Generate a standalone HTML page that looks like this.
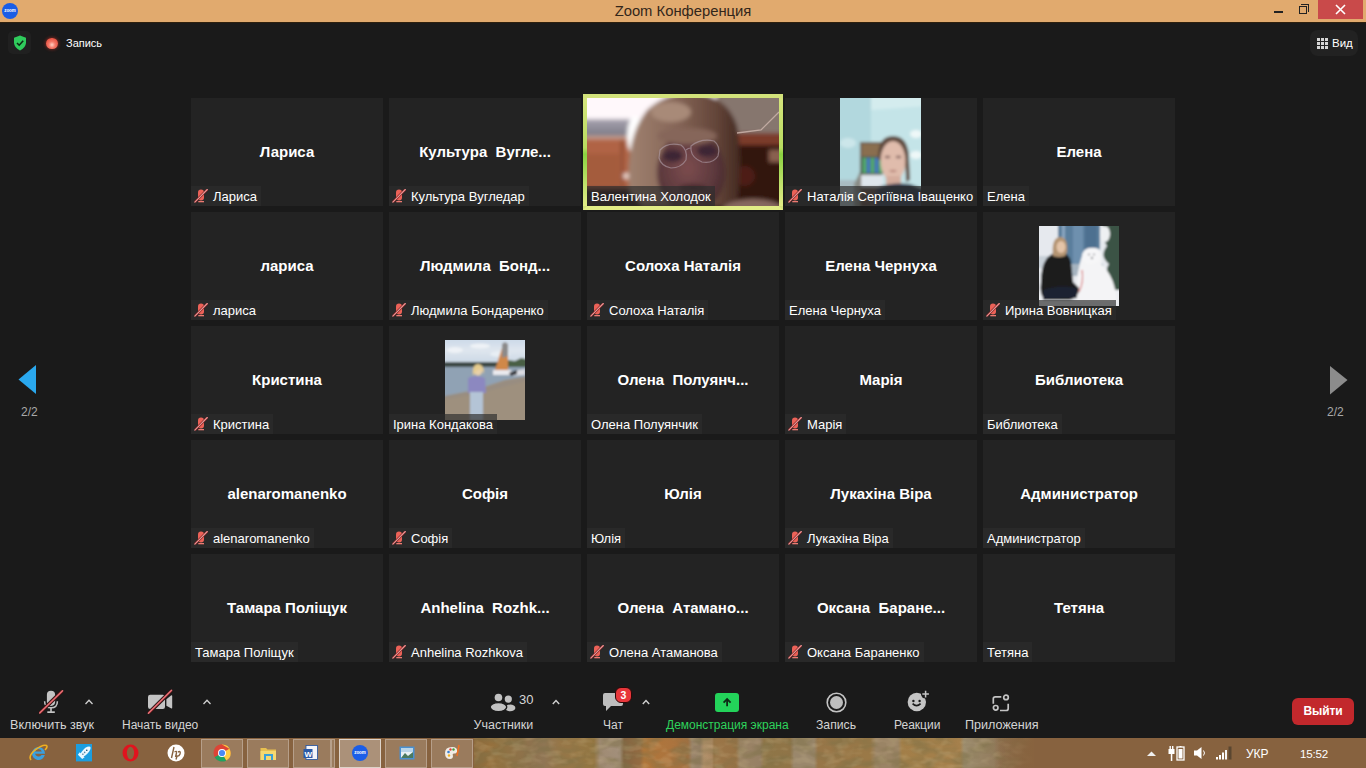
<!DOCTYPE html>
<html><head><meta charset="utf-8">
<style>
*{margin:0;padding:0;box-sizing:border-box}
html,body{width:1366px;height:768px;overflow:hidden;background:#1a1a1a;font-family:"Liberation Sans",sans-serif;position:relative}
.a{position:absolute}
#title{position:absolute;left:0;top:0;width:1366px;height:23px;background:#e1aa6e;border-bottom:1px solid #2e200e}
#title .t{position:absolute;left:0;width:1366px;top:3px;text-align:center;font-size:14.8px;color:#33261a}
#logo{position:absolute;left:2px;top:3px;width:16px;height:16px;border-radius:50%;background:#1a5de6;font-size:4.5px;color:#fff;text-align:center;line-height:16px;font-weight:bold}
#close{position:absolute;left:1318px;top:0;width:45px;height:19px;background:#c94a4a}
.tile{position:absolute;width:192px;height:108px;background:#232323;overflow:hidden}
.tile.active{overflow:visible}
.tile.active::before{content:"";position:absolute;left:-4px;top:-4px;right:-4px;bottom:-4px;border:4px solid #d2e27a;border-bottom-color:#e2ec86;z-index:3}
.tile.active::after{content:"";position:absolute;left:-4px;top:0;width:200px;height:108px;background:linear-gradient(180deg,#d4e47c 0%,#b8dc60 46%,#8ad240 52%,#c0e26c 80%,#e2ec86 100%);-webkit-mask:linear-gradient(90deg,#000 4px,transparent 4px,transparent 196px,#000 196px);z-index:3}
.cn{position:absolute;left:0;top:0;width:192px;height:108px;line-height:108px;text-align:center;font-weight:bold;font-size:15px;color:#fff;white-space:nowrap}
.lb{position:absolute;left:0;bottom:0;height:20px;background:rgba(45,45,45,0.675);padding:0 4px 0 4px;white-space:nowrap;font-size:13px;color:#fff;display:flex;align-items:center;z-index:2}
.lb .mic{margin-right:5px;margin-left:-1px}
.lb span{line-height:20px;position:relative;top:1px}
.tl{position:absolute;font-size:12px;color:#d4d4d4;white-space:nowrap;top:717px;line-height:16px}
#taskbar{position:absolute;left:0;top:738px;width:1366px;height:30px;background:#87623f}
#wall{position:absolute;left:474px;top:0;width:560px;height:30px;background:linear-gradient(90deg,#98703e 0px,#a27a44 16px,#9c7c4a 30px,#9a7c56 56px,#9c805e 70px,#a48250 86px,#a08048 120px,#ae9880 126px,#b09c88 146px,#8e6c48 150px,#a07448 166px,#c08040 170px,#bc7e44 196px,#b07a48 214px,#a89078 218px,#a08a70 226px,#c4a078 230px,#c09870 238px,#a88050 240px,#a47c4c 262px,#a89070 266px,#a48c70 286px,#9a8050 290px,#9c7e4e 316px,#a89478 320px,#a89478 340px,#a48050 344px,#a8844e 396px,#a89070 402px,#a89070 424px,#b08a50 428px,#b48c54 486px,#a89878 490px,#a08868 520px,#9a7a58 526px,#8c6842 560px)}
.tbtn{position:absolute;top:1px;height:29px;width:42px;background:rgba(255,255,255,0.16);border:1px solid rgba(255,255,255,0.28)}
</style></head><body>
<div id="title"><div id="logo">zoom</div><div class="t">Zoom Конференция</div>
<div class="a" style="left:1274px;top:11px;width:9px;height:2px;background:#222"></div>
<div class="a" style="left:1299px;top:6px;width:8px;height:8px;border:1.5px solid #222"></div>
<div class="a" style="left:1301px;top:4px;width:8px;height:8px;border-top:1.5px solid #222;border-right:1.5px solid #222"></div>
<div id="close"><svg width="45" height="19" viewBox="0 0 45 19"><path d="M18 5 L27 14 M27 5 L18 14" stroke="#fff" stroke-width="1.6"/></svg></div>
</div>
<!-- top bar -->
<div class="a" style="left:8px;top:31px;width:23px;height:23px;border-radius:5px;background:#202020"></div>
<svg class="a" style="left:13px;top:35px" width="14" height="16" viewBox="0 0 14 16"><path d="M7 0.5 L13 2.8 L13 8 Q12.5 13 7 15.5 Q1.5 13 1 8 L1 2.8Z" fill="#2fcb5c"/><path d="M4 8 L6.2 10.2 L10.2 5.8" stroke="#0d2a14" stroke-width="1.6" fill="none"/></svg>
<div class="a" style="left:46px;top:37.5px;width:11.5px;height:11.5px;border-radius:50%;background:radial-gradient(circle at 50% 62%,#ffd0c4 0,#f47868 35%,#e44a3a 80%);box-shadow:0 0 3px 1px rgba(200,50,40,0.45)"></div>
<div class="a" style="left:66px;top:36.5px;font-size:11px;color:#fff">Запись</div>
<div class="a" style="left:1310px;top:30px;width:48px;height:26px;border-radius:8px;background:#222"></div>
<svg class="a" style="left:1317px;top:38px" width="11" height="11" viewBox="0 0 11 11" fill="#d6d6d6"><rect x="0" y="0" width="3" height="3"/><rect x="4" y="0" width="3" height="3"/><rect x="8" y="0" width="3" height="3"/><rect x="0" y="4" width="3" height="3"/><rect x="4" y="4" width="3" height="3"/><rect x="8" y="4" width="3" height="3"/><rect x="0" y="8" width="3" height="3"/><rect x="4" y="8" width="3" height="3"/><rect x="8" y="8" width="3" height="3"/></svg>
<div class="a" style="left:1332px;top:36.5px;font-size:11.5px;color:#fff">Вид</div>
<!-- side arrows -->
<svg class="a" style="left:18px;top:365px" width="19" height="30" viewBox="0 0 19 30"><path d="M0.5 14.5 L18 0 L18 29Z" fill="#2aa8ee"/></svg>
<div class="a" style="left:21px;top:405px;font-size:12px;color:#a8a8a8">2/2</div>
<svg class="a" style="left:1330px;top:366px" width="18" height="29" viewBox="0 0 18 29"><path d="M0 0 L17.5 14 L0 28.5Z" fill="#8c8c8c"/></svg>
<div class="a" style="left:1327px;top:405px;font-size:12px;color:#a8a8a8">2/2</div>
<div class="tile" style="left:191px;top:98px"><div class="cn">Лариса</div><div class="lb"><svg class="mic" width="14" height="14" viewBox="0 0 14 14"><rect x="4" y="0.4" width="6" height="11.2" rx="3" fill="#ec6258"/><rect x="4.3" y="12" width="5.7" height="1.3" fill="#ec7a72"/><path d="M0.8 13.1 L13.3 0.5" stroke="#7a1c1c" stroke-width="2.4"/><path d="M0.8 13.1 L13.3 0.5" stroke="#e89a9a" stroke-width="1.1" stroke-linecap="round"/></svg><span>Лариса</span></div></div>
<div class="tile" style="left:389px;top:98px"><div class="cn">Культура&nbsp; Вугле...</div><div class="lb"><svg class="mic" width="14" height="14" viewBox="0 0 14 14"><rect x="4" y="0.4" width="6" height="11.2" rx="3" fill="#ec6258"/><rect x="4.3" y="12" width="5.7" height="1.3" fill="#ec7a72"/><path d="M0.8 13.1 L13.3 0.5" stroke="#7a1c1c" stroke-width="2.4"/><path d="M0.8 13.1 L13.3 0.5" stroke="#e89a9a" stroke-width="1.1" stroke-linecap="round"/></svg><span>Культура Вугледар</span></div></div>
<div class="tile active" style="left:587px;top:98px"><svg width="192" height="108" viewBox="0 0 192 108" style="position:absolute;left:0;top:0">
<defs><filter id="vb" x="-10%" y="-10%" width="120%" height="120%"><feGaussianBlur stdDeviation="2"/></filter><filter id="vb2"><feGaussianBlur stdDeviation="0.5"/></filter><clipPath id="vc"><rect width="192" height="108"/></clipPath>
<linearGradient id="vwall" x1="0" y1="0" x2="0" y2="1"><stop offset="0" stop-color="#a8a4b0"/><stop offset="1" stop-color="#7c7a86"/></linearGradient>
<linearGradient id="vhairg" x1="0" y1="0" x2="1" y2="0"><stop offset="0" stop-color="#a08270"/><stop offset="0.45" stop-color="#846456"/><stop offset="0.8" stop-color="#624438"/><stop offset="1" stop-color="#442a22"/></linearGradient>
<radialGradient id="vfaceg" cx="0.45" cy="0.45" r="0.6"><stop offset="0" stop-color="#7c4c4e"/><stop offset="0.65" stop-color="#5e3a3e"/><stop offset="1" stop-color="#46282c"/></radialGradient></defs>
<g clip-path="url(#vc)"><g filter="url(#vb)">
<rect x="-10" y="-10" width="212" height="128" fill="#2c1612"/>
<rect x="120" y="-10" width="82" height="46" fill="#86766e"/>
<rect x="-10" y="-10" width="140" height="32" fill="#fff8fb"/>
<rect x="-10" y="21" width="58" height="17" fill="url(#vwall)"/>
<rect x="-10" y="38" width="56" height="52" fill="#b06444"/>
<rect x="-10" y="38" width="56" height="3" fill="#c8a090"/>
<rect x="-2" y="56" width="34" height="32" fill="#a45c3e"/>
<rect x="34" y="42" width="2" height="46" fill="#7a3c2c"/>
<ellipse cx="40" cy="78" rx="4" ry="3" fill="#f0d8d0"/>
<rect x="150" y="35" width="52" height="12" fill="#7c3a2a"/>
<rect x="150" y="47" width="52" height="61" fill="#32160f"/>
<ellipse cx="158" cy="78" rx="10" ry="10" fill="#4e1e16"/>
<rect x="182" y="52" width="14" height="12" fill="#8a6050"/>
<ellipse cx="48" cy="38" rx="8" ry="20" fill="#ffffff"/>
<path d="M42 92 Q38 40 60 12 Q80 -6 106 -5 Q140 -3 150 28 Q156 60 150 108 L56 108Z" fill="url(#vhairg)"/>
<ellipse cx="84" cy="14" rx="20" ry="10" fill="#a88a78"/>
<ellipse cx="104" cy="74" rx="34" ry="40" fill="url(#vfaceg)"/>
<ellipse cx="100" cy="38" rx="30" ry="8" fill="#86665a"/>
<ellipse cx="86" cy="58" rx="10" ry="6" fill="#3e2634"/>
<ellipse cx="120" cy="53" rx="10" ry="6" fill="#3e2634"/>
<ellipse cx="106" cy="90" rx="14" ry="4" fill="#4a2a2e"/>
<ellipse cx="166" cy="114" rx="32" ry="13" fill="#86685e"/>
</g>
<path d="M150 35 L174 32 L192 14" stroke="#d0b8b0" stroke-width="1.3" fill="none" filter="url(#vb2)" opacity="0.8"/>
<g filter="url(#vb2)" fill="none" stroke="#b8a8b4" stroke-width="1.2" opacity="0.55"><path d="M73 52 Q80 44 94 47 Q101 52 99 62 Q94 70 84 70 Q74 68 72 60Z"/><path d="M104 48 Q114 40 127 43 Q134 48 131 58 Q126 66 115 64 Q105 60 104 52Z"/><path d="M99 52 Q101 50 104 50"/></g>
</g>
</svg><div class="lb"><span>Валентина Холодок</span></div></div>
<div class="tile" style="left:785px;top:98px"><svg width="81" height="108" viewBox="0 0 81 108" style="position:absolute;left:55px;top:0">
<defs><filter id="nb" x="-5%" y="-5%" width="110%" height="110%"><feGaussianBlur stdDeviation="1.4"/></filter><clipPath id="nc"><rect width="81" height="108"/></clipPath></defs>
<g clip-path="url(#nc)"><g filter="url(#nb)">
<rect x="-5" y="-5" width="91" height="118" fill="#c4e4e8"/>
<rect x="-5" y="-5" width="36" height="118" fill="#b2d8de"/>
<path d="M31 -5 L86 -5 L86 8 L31 12Z" fill="#d4ecee"/>
<ellipse cx="76" cy="36" rx="6" ry="4" fill="#eef8f8"/>
<ellipse cx="76" cy="57" rx="6" ry="4" fill="#eef8f8"/>
<ellipse cx="8" cy="45" rx="8" ry="5" fill="#cce6ea"/>
<rect x="-5" y="82" width="26" height="30" fill="#a8bcc2"/>
<path d="M14 86 L22 70 L24 110 L14 110Z" fill="#8a8e88"/>
<rect x="20" y="44" width="22" height="66" fill="#6e5a48"/>
<rect x="22" y="46" width="18" height="12" fill="#8a6e50"/>
<rect x="21" y="59" width="22" height="17" fill="#3a6a56"/>
<rect x="23" y="60" width="3" height="15" fill="#58b070"/><rect x="27" y="60" width="3" height="15" fill="#4a7ac8"/><rect x="31" y="60" width="3" height="15" fill="#58b070"/><rect x="35" y="60" width="3" height="15" fill="#4a7ac8"/><rect x="39" y="60" width="3" height="15" fill="#58b070"/>
<rect x="21" y="77" width="22" height="12" fill="#dfe6ec"/>
<rect x="21" y="90" width="22" height="20" fill="#5a4a40"/>
<path d="M38 62 Q37 38 53 38 Q69 38 69 62 L70 82 L66 84 Q66 46 53 46 Q42 46 41 62Z" fill="#5e4a3e"/>
<ellipse cx="53" cy="63" rx="12.5" ry="20" fill="#e0bcac"/>
<rect x="46" y="78" width="15" height="12" fill="#d4ac9c"/>
<ellipse cx="47.5" cy="59" rx="2.8" ry="1.2" fill="#7a5a58"/><ellipse cx="58.5" cy="59" rx="2.8" ry="1.2" fill="#7a5a58"/>
<ellipse cx="53" cy="73" rx="3.5" ry="1" fill="#b07a70"/>
<path d="M36 90 Q50 84 70 86 L86 92 L86 112 L36 112Z" fill="#2c3448"/>
</g></g>
</svg><div class="lb"><svg class="mic" width="14" height="14" viewBox="0 0 14 14"><rect x="4" y="0.4" width="6" height="11.2" rx="3" fill="#ec6258"/><rect x="4.3" y="12" width="5.7" height="1.3" fill="#ec7a72"/><path d="M0.8 13.1 L13.3 0.5" stroke="#7a1c1c" stroke-width="2.4"/><path d="M0.8 13.1 L13.3 0.5" stroke="#e89a9a" stroke-width="1.1" stroke-linecap="round"/></svg><span>Наталія Сергіївна Іващенко</span></div></div>
<div class="tile" style="left:983px;top:98px"><div class="cn">Елена</div><div class="lb"><span>Елена</span></div></div>
<div class="tile" style="left:191px;top:212px"><div class="cn">лариса</div><div class="lb"><svg class="mic" width="14" height="14" viewBox="0 0 14 14"><rect x="4" y="0.4" width="6" height="11.2" rx="3" fill="#ec6258"/><rect x="4.3" y="12" width="5.7" height="1.3" fill="#ec7a72"/><path d="M0.8 13.1 L13.3 0.5" stroke="#7a1c1c" stroke-width="2.4"/><path d="M0.8 13.1 L13.3 0.5" stroke="#e89a9a" stroke-width="1.1" stroke-linecap="round"/></svg><span>лариса</span></div></div>
<div class="tile" style="left:389px;top:212px"><div class="cn">Людмила&nbsp; Бонд...</div><div class="lb"><svg class="mic" width="14" height="14" viewBox="0 0 14 14"><rect x="4" y="0.4" width="6" height="11.2" rx="3" fill="#ec6258"/><rect x="4.3" y="12" width="5.7" height="1.3" fill="#ec7a72"/><path d="M0.8 13.1 L13.3 0.5" stroke="#7a1c1c" stroke-width="2.4"/><path d="M0.8 13.1 L13.3 0.5" stroke="#e89a9a" stroke-width="1.1" stroke-linecap="round"/></svg><span>Людмила Бондаренко</span></div></div>
<div class="tile" style="left:587px;top:212px"><div class="cn">Солоха Наталія</div><div class="lb"><svg class="mic" width="14" height="14" viewBox="0 0 14 14"><rect x="4" y="0.4" width="6" height="11.2" rx="3" fill="#ec6258"/><rect x="4.3" y="12" width="5.7" height="1.3" fill="#ec7a72"/><path d="M0.8 13.1 L13.3 0.5" stroke="#7a1c1c" stroke-width="2.4"/><path d="M0.8 13.1 L13.3 0.5" stroke="#e89a9a" stroke-width="1.1" stroke-linecap="round"/></svg><span>Солоха Наталія</span></div></div>
<div class="tile" style="left:785px;top:212px"><div class="cn">Елена Чернуха</div><div class="lb"><span>Елена Чернуха</span></div></div>
<div class="tile" style="left:983px;top:212px"><svg width="80" height="80" viewBox="0 0 80 80" style="position:absolute;left:56px;top:14px">
<defs><filter id="ib" x="-5%" y="-5%" width="110%" height="110%"><feGaussianBlur stdDeviation="0.8"/></filter><clipPath id="ic"><rect width="80" height="80"/></clipPath></defs>
<g clip-path="url(#ic)"><g filter="url(#ib)">
<rect x="-5" y="-5" width="90" height="90" fill="#e6e9ee"/>
<rect x="19" y="-5" width="42" height="44" fill="#5a7e9c"/>
<rect x="23" y="-5" width="3" height="44" fill="#8aa6c0"/>
<rect x="34" y="-5" width="10" height="44" fill="#6e90ae"/>
<rect x="46" y="-5" width="12" height="44" fill="#4e7090"/>
<rect x="-5" y="30" width="24" height="12" fill="#c8d0d8"/>
<rect x="19" y="38" width="45" height="12" fill="#a6b4c0"/>
<path d="M62 -5 L85 -5 L85 78 L72 76 Q70 64 74 56 Q64 46 70 38 Q60 30 68 20 Q62 10 66 4Z" fill="#3a5244"/>
<ellipse cx="66" cy="8" rx="5" ry="8" fill="#eef0f2"/>
<rect x="-5" y="64" width="90" height="22" fill="#eceef2"/>
<path d="M38 76 Q36 56 40 42 Q42 30 46 24 Q52 20 60 23 Q64 28 62 38 Q76 50 78 76Z" fill="#f4f4f6"/>
<ellipse cx="52" cy="30" rx="9" ry="8" fill="#f6f6f8"/>
<circle cx="50" cy="28.5" r="0.7" fill="#333"/><circle cx="55" cy="28.5" r="0.7" fill="#333"/><ellipse cx="53" cy="32" rx="1" ry="0.8" fill="#222"/>
<path d="M2 56 Q2 40 8 32 Q14 26 20 26 Q30 26 32 36 L34 56 L40 62 Q40 72 30 74 L6 74 Q0 68 2 56Z" fill="#1c1e1e"/>
<path d="M4 64 Q20 58 38 62 L38 72 L4 74Z" fill="#1a2230"/>
<path d="M14 30 Q12 12 21 11 Q29 11 28 26 L26 30 Q20 32 14 30Z" fill="#b49472"/>
<ellipse cx="22" cy="21" rx="4.5" ry="6" fill="#e4c4a8"/>
<path d="M43 44 Q45 56 40 66" stroke="#d04848" stroke-width="0.9" fill="none"/>
</g></g>
</svg><div class="lb"><svg class="mic" width="14" height="14" viewBox="0 0 14 14"><rect x="4" y="0.4" width="6" height="11.2" rx="3" fill="#ec6258"/><rect x="4.3" y="12" width="5.7" height="1.3" fill="#ec7a72"/><path d="M0.8 13.1 L13.3 0.5" stroke="#7a1c1c" stroke-width="2.4"/><path d="M0.8 13.1 L13.3 0.5" stroke="#e89a9a" stroke-width="1.1" stroke-linecap="round"/></svg><span>Ирина Вовницкая</span></div></div>
<div class="tile" style="left:191px;top:326px"><div class="cn">Кристина</div><div class="lb"><svg class="mic" width="14" height="14" viewBox="0 0 14 14"><rect x="4" y="0.4" width="6" height="11.2" rx="3" fill="#ec6258"/><rect x="4.3" y="12" width="5.7" height="1.3" fill="#ec7a72"/><path d="M0.8 13.1 L13.3 0.5" stroke="#7a1c1c" stroke-width="2.4"/><path d="M0.8 13.1 L13.3 0.5" stroke="#e89a9a" stroke-width="1.1" stroke-linecap="round"/></svg><span>Кристина</span></div></div>
<div class="tile" style="left:389px;top:326px"><svg width="80" height="80" viewBox="0 0 80 80" style="position:absolute;left:56px;top:14px">
<defs><filter id="kb" x="-5%" y="-5%" width="110%" height="110%"><feGaussianBlur stdDeviation="0.8"/></filter><clipPath id="kc"><rect width="80" height="80"/></clipPath>
<linearGradient id="ksky" x1="0" y1="0" x2="0" y2="1"><stop offset="0" stop-color="#c4d4e6"/><stop offset="0.5" stop-color="#dfe6ee"/><stop offset="1" stop-color="#c8d6e4"/></linearGradient></defs>
<g clip-path="url(#kc)"><g filter="url(#kb)">
<rect x="-5" y="-5" width="90" height="30" fill="url(#ksky)"/>
<ellipse cx="10" cy="10" rx="8" ry="3" fill="#eef2f6"/><ellipse cx="35" cy="6" rx="10" ry="2.5" fill="#eef2f6"/><ellipse cx="55" cy="14" rx="10" ry="3" fill="#e8eef4"/>
<rect x="-5" y="22" width="90" height="5" fill="#3c4a44"/>
<path d="M58 27 L62 20 L70 21 L76 18 L85 20 L85 30 L58 30Z" fill="#4a5e44"/>
<rect x="-5" y="27" width="90" height="30" fill="#90a2b4"/>
<path d="M-5 57 L30 50 L60 40 L85 36 L85 85 L-5 85Z" fill="#9e907e"/>
<path d="M-5 60 L30 54 L85 40 L85 37 L60 41 L30 51 L-5 57Z" fill="#948c84" opacity="0.6"/>
<path d="M50 30 L57 8 L63 6 L63 30Z" fill="#d0884a"/>
<path d="M57 4 L60 2 L63 4 L63 16 L57 18Z" fill="#8c8a8a"/>
<rect x="48" y="30" width="18" height="5" fill="#eaeaee"/>
<path d="M64 32 L80 29 L80 35 L66 36Z" fill="#dcdce2"/><path d="M64 33 L72 30 L72 34 L66 36Z" fill="#2a2a30"/>
<path d="M23 38 Q30 34 40 38 L41 53 L23 53Z" fill="#8c88c0"/>
<rect x="25" y="52" width="13" height="28" fill="#b4c4d6"/>
<ellipse cx="33" cy="30" rx="4.5" ry="5.5" fill="#e8d0a8"/>
<path d="M28 36 Q27 24 33 24 Q39 24 39 34 L37 30 Q33 28 30 32Z" fill="#e6cc8e"/>
</g></g>
</svg><div class="lb"><span>Ірина Кондакова</span></div></div>
<div class="tile" style="left:587px;top:326px"><div class="cn">Олена&nbsp; Полуянч...</div><div class="lb"><span>Олена Полуянчик</span></div></div>
<div class="tile" style="left:785px;top:326px"><div class="cn">Марія</div><div class="lb"><svg class="mic" width="14" height="14" viewBox="0 0 14 14"><rect x="4" y="0.4" width="6" height="11.2" rx="3" fill="#ec6258"/><rect x="4.3" y="12" width="5.7" height="1.3" fill="#ec7a72"/><path d="M0.8 13.1 L13.3 0.5" stroke="#7a1c1c" stroke-width="2.4"/><path d="M0.8 13.1 L13.3 0.5" stroke="#e89a9a" stroke-width="1.1" stroke-linecap="round"/></svg><span>Марія</span></div></div>
<div class="tile" style="left:983px;top:326px"><div class="cn">Библиотека</div><div class="lb"><span>Библиотека</span></div></div>
<div class="tile" style="left:191px;top:440px"><div class="cn">alenaromanenko</div><div class="lb"><svg class="mic" width="14" height="14" viewBox="0 0 14 14"><rect x="4" y="0.4" width="6" height="11.2" rx="3" fill="#ec6258"/><rect x="4.3" y="12" width="5.7" height="1.3" fill="#ec7a72"/><path d="M0.8 13.1 L13.3 0.5" stroke="#7a1c1c" stroke-width="2.4"/><path d="M0.8 13.1 L13.3 0.5" stroke="#e89a9a" stroke-width="1.1" stroke-linecap="round"/></svg><span>alenaromanenko</span></div></div>
<div class="tile" style="left:389px;top:440px"><div class="cn">Софія</div><div class="lb"><svg class="mic" width="14" height="14" viewBox="0 0 14 14"><rect x="4" y="0.4" width="6" height="11.2" rx="3" fill="#ec6258"/><rect x="4.3" y="12" width="5.7" height="1.3" fill="#ec7a72"/><path d="M0.8 13.1 L13.3 0.5" stroke="#7a1c1c" stroke-width="2.4"/><path d="M0.8 13.1 L13.3 0.5" stroke="#e89a9a" stroke-width="1.1" stroke-linecap="round"/></svg><span>Софія</span></div></div>
<div class="tile" style="left:587px;top:440px"><div class="cn">Юлія</div><div class="lb"><span>Юлія</span></div></div>
<div class="tile" style="left:785px;top:440px"><div class="cn">Лукахіна Віра</div><div class="lb"><svg class="mic" width="14" height="14" viewBox="0 0 14 14"><rect x="4" y="0.4" width="6" height="11.2" rx="3" fill="#ec6258"/><rect x="4.3" y="12" width="5.7" height="1.3" fill="#ec7a72"/><path d="M0.8 13.1 L13.3 0.5" stroke="#7a1c1c" stroke-width="2.4"/><path d="M0.8 13.1 L13.3 0.5" stroke="#e89a9a" stroke-width="1.1" stroke-linecap="round"/></svg><span>Лукахіна Віра</span></div></div>
<div class="tile" style="left:983px;top:440px"><div class="cn">Администратор</div><div class="lb"><span>Администратор</span></div></div>
<div class="tile" style="left:191px;top:554px"><div class="cn">Тамара Поліщук</div><div class="lb"><span>Тамара Поліщук</span></div></div>
<div class="tile" style="left:389px;top:554px"><div class="cn">Anhelina&nbsp; Rozhk...</div><div class="lb"><svg class="mic" width="14" height="14" viewBox="0 0 14 14"><rect x="4" y="0.4" width="6" height="11.2" rx="3" fill="#ec6258"/><rect x="4.3" y="12" width="5.7" height="1.3" fill="#ec7a72"/><path d="M0.8 13.1 L13.3 0.5" stroke="#7a1c1c" stroke-width="2.4"/><path d="M0.8 13.1 L13.3 0.5" stroke="#e89a9a" stroke-width="1.1" stroke-linecap="round"/></svg><span>Anhelina Rozhkova</span></div></div>
<div class="tile" style="left:587px;top:554px"><div class="cn">Олена&nbsp; Атамано...</div><div class="lb"><svg class="mic" width="14" height="14" viewBox="0 0 14 14"><rect x="4" y="0.4" width="6" height="11.2" rx="3" fill="#ec6258"/><rect x="4.3" y="12" width="5.7" height="1.3" fill="#ec7a72"/><path d="M0.8 13.1 L13.3 0.5" stroke="#7a1c1c" stroke-width="2.4"/><path d="M0.8 13.1 L13.3 0.5" stroke="#e89a9a" stroke-width="1.1" stroke-linecap="round"/></svg><span>Олена Атаманова</span></div></div>
<div class="tile" style="left:785px;top:554px"><div class="cn">Оксана&nbsp; Бaране...</div><div class="lb"><svg class="mic" width="14" height="14" viewBox="0 0 14 14"><rect x="4" y="0.4" width="6" height="11.2" rx="3" fill="#ec6258"/><rect x="4.3" y="12" width="5.7" height="1.3" fill="#ec7a72"/><path d="M0.8 13.1 L13.3 0.5" stroke="#7a1c1c" stroke-width="2.4"/><path d="M0.8 13.1 L13.3 0.5" stroke="#e89a9a" stroke-width="1.1" stroke-linecap="round"/></svg><span>Оксана Бараненко</span></div></div>
<div class="tile" style="left:983px;top:554px"><div class="cn">Тетяна</div><div class="lb"><span>Тетяна</span></div></div>

<!-- toolbar -->
<svg class="a" style="left:36px;top:686px" width="30" height="30" viewBox="0 0 30 30"><rect x="10.9" y="4.7" width="8.2" height="15.2" rx="4.1" fill="#c4c4c4"/><path d="M8.6 15.2 Q8.6 21.8 15 21.8 Q21.4 21.8 21.4 15.2" stroke="#c4c4c4" stroke-width="1.5" fill="none"/><rect x="14.2" y="21.5" width="1.6" height="4.5" fill="#c4c4c4"/><rect x="11.3" y="25.3" width="7.5" height="1.7" fill="#c4c4c4"/><path d="M3.7 27 L26.6 4.7" stroke="#1a1a1a" stroke-width="3.8"/><path d="M3.7 27 L26.6 4.7" stroke="#6a1818" stroke-width="2.6"/><path d="M3.7 27 L26.6 4.7" stroke="#e8737a" stroke-width="1.5" stroke-linecap="round"/></svg>
<svg class="a" style="left:84px;top:698px" width="10" height="8" viewBox="0 0 10 8"><path d="M1.5 6 L5 2.3 L8.5 6" stroke="#d0d0d0" stroke-width="1.3" fill="none"/></svg>
<div class="tl" style="left:10px;font-size:12.6px">Включить звук</div>
<svg class="a" style="left:140px;top:686px" width="34" height="30" viewBox="0 0 34 30"><rect x="8" y="8.8" width="17" height="14.2" rx="2.2" fill="#c4c4c4"/><path d="M26.4 13.3 L31 9.6 Q32.2 8.8 32.2 10.2 L32.2 21.6 Q32.2 23 31 22.2 L26.4 19.8Z" fill="#c4c4c4"/><path d="M8.4 27.3 L31.6 4.3" stroke="#1a1a1a" stroke-width="3.8"/><path d="M8.4 27.3 L31.6 4.3" stroke="#6a1818" stroke-width="2.6"/><path d="M8.4 27.3 L31.6 4.3" stroke="#e8737a" stroke-width="1.5" stroke-linecap="round"/></svg>
<svg class="a" style="left:202px;top:698px" width="10" height="8" viewBox="0 0 10 8"><path d="M1.5 6 L5 2.3 L8.5 6" stroke="#d0d0d0" stroke-width="1.3" fill="none"/></svg>
<div class="tl" style="left:122px;font-size:12px">Начать видео</div>
<svg class="a" style="left:486px;top:688px" width="32" height="26" viewBox="0 0 32 26" fill="#c2c2c2"><circle cx="12.45" cy="9.5" r="3.8"/><circle cx="22.3" cy="11.1" r="3.6"/><ellipse cx="24.2" cy="19.9" rx="5.2" ry="3.3"/><ellipse cx="12.45" cy="19.1" rx="8.3" ry="4.5" stroke="#1a1a1a" stroke-width="1.4"/></svg>
<div class="a" style="left:519px;top:692px;font-size:13px;color:#d6d6d6">30</div>
<svg class="a" style="left:552px;top:699px" width="8" height="6" viewBox="0 0 8 6"><path d="M0.8 5 L4 1.5 L7.2 5" stroke="#d0d0d0" stroke-width="1.4" fill="none"/></svg>
<div class="tl" style="left:473.5px;font-size:12.5px">Участники</div>
<svg class="a" style="left:602px;top:692px" width="22" height="20" viewBox="0 0 22 20"><path d="M3 1 L19 1 Q21 1 21 3 L21 12 Q21 14 19 14 L9 14 L4 19 L4 14 L3 14 Q1 14 1 12 L1 3 Q1 1 3 1Z" fill="#bdbdbd"/></svg>
<div class="a" style="left:615px;top:687px;width:17px;height:16px;border-radius:6px;background:#e8363a;border:1px solid #2a0808;font-size:10.5px;font-weight:bold;color:#fff;text-align:center;line-height:14px">3</div>
<svg class="a" style="left:642px;top:699px" width="8" height="6" viewBox="0 0 8 6"><path d="M0.8 5 L4 1.5 L7.2 5" stroke="#d0d0d0" stroke-width="1.4" fill="none"/></svg>
<div class="tl" style="left:603px">Чат</div>
<div class="a" style="left:715px;top:693px;width:24px;height:19px;border-radius:3px;background:#23d35a"></div>
<svg class="a" style="left:721px;top:696px" width="12" height="12" viewBox="0 0 12 12"><path d="M6.1 3.2 L6.1 10.3" stroke="#0e2a16" stroke-width="1.8"/><path d="M2.6 6.6 L6.1 3 L9.6 6.6" stroke="#0e2a16" stroke-width="1.8" fill="none"/></svg>
<div class="tl" style="left:666px;color:#2ed35c">Демонстрация экрана</div>
<svg class="a" style="left:826px;top:692px" width="21" height="21" viewBox="0 0 21 21"><circle cx="10.5" cy="10.5" r="9.3" fill="none" stroke="#c4c4c4" stroke-width="1.6"/><circle cx="10.5" cy="10.5" r="6.5" fill="#bdbdbd"/></svg>
<div class="tl" style="left:816px;font-size:12.2px">Запись</div>
<svg class="a" style="left:905px;top:689px" width="26" height="24" viewBox="0 0 26 24"><circle cx="11.8" cy="13" r="9.2" fill="#c4c4c4"/><circle cx="20.6" cy="5" r="4.6" fill="#1a1a1a"/><path d="M20.6 1.8 L20.6 8.4 M17.3 5.1 L23.9 5.1" stroke="#c4c4c4" stroke-width="1.5"/><circle cx="8.4" cy="12" r="1.2" fill="#1a1a1a"/><circle cx="14.6" cy="12" r="1.2" fill="#1a1a1a"/><path d="M7.6 14.6 Q11.5 18.6 15.6 14.6" stroke="#1a1a1a" stroke-width="1.6" fill="none"/></svg>
<div class="tl" style="left:894px">Реакции</div>
<svg class="a" style="left:990px;top:693px" width="22" height="20" viewBox="0 0 22 20" fill="none" stroke="#c4c4c4" stroke-width="1.7"><path d="M3.3 10.7 L3.3 5.8 Q3.3 3.8 5.3 3.8 L11.3 3.8"/><circle cx="16" cy="4.4" r="2.3"/><circle cx="5.7" cy="14.8" r="2.3"/><path d="M18.2 10.7 L18.2 15.5 Q18.2 17.5 16.2 17.5 L10 17.5"/></svg>
<div class="tl" style="left:965px;font-size:12.6px">Приложения</div>
<div class="a" style="left:1292px;top:698px;width:62px;height:27px;border-radius:6px;background:#c2282c"></div>
<div class="a" style="left:1292px;top:698px;width:62px;height:27px;line-height:27px;text-align:center;font-size:12px;font-weight:bold;color:#fff;letter-spacing:-0.1px">Выйти</div>
<!-- taskbar -->
<div id="taskbar"><div id="wall"></div>
<svg class="a" style="left:474px;top:0" width="560" height="30" viewBox="0 0 560 30"><defs><filter id="tn" x="0" y="0" width="100%" height="100%"><feTurbulence type="fractalNoise" baseFrequency="0.05 0.1" numOctaves="2" seed="7"/><feColorMatrix type="matrix" values="0 0 0 0 0.25  0 0 0 0 0.2  0 0 0 0 0.08  3.5 0 0 0 -1.45"/></filter>
<filter id="tn2" x="0" y="0" width="100%" height="100%"><feTurbulence type="fractalNoise" baseFrequency="0.08 0.15" numOctaves="2" seed="3"/><feColorMatrix type="matrix" values="0 0 0 0 0.85  0 0 0 0 0.7  0 0 0 0 0.4  3.5 0 0 0 -1.6"/></filter>
<linearGradient id="tfade" x1="0" y1="0" x2="1" y2="0"><stop offset="0.93" stop-color="#88633f" stop-opacity="0"/><stop offset="1" stop-color="#88633f" stop-opacity="1"/></linearGradient></defs>
<rect width="560" height="30" filter="url(#tn)" opacity="0.5"/><rect width="560" height="30" filter="url(#tn2)" opacity="0.18"/><rect width="560" height="30" fill="#2a1a08" opacity="0.1"/><rect width="560" height="30" fill="url(#tfade)"/></svg>

<svg class="a" style="left:29px;top:6px" width="19" height="18" viewBox="0 0 19 18"><path d="M9.5 3 A6.5 6.5 0 1 0 15.8 11 L12.5 11 A3.6 3.6 0 0 1 6 9.8 L16 9.8 A6.5 6.5 0 0 0 9.5 3Z M6.2 7.6 A3.4 3.4 0 0 1 12.8 7.6Z" fill="#3aa0e0"/><path d="M2 16 Q-1 12 6 6 Q14 0 17.5 1.5 Q19 3 16 6" stroke="#f0b020" stroke-width="1.6" fill="none"/></svg>
<svg class="a" style="left:76px;top:6px" width="16" height="18" viewBox="0 0 16 18"><rect x="0" y="0" width="16" height="17.4" fill="#1b9ee0"/><g transform="rotate(45 9 8)"><ellipse cx="9" cy="7.5" rx="2.8" ry="6.8" fill="#eaf8ff"/><path d="M5.5 12 L12.5 12 L12 15 L6 15Z" fill="#eaf8ff"/><circle cx="9" cy="5.5" r="0.8" fill="#1a4a6a"/><circle cx="9" cy="8.5" r="0.8" fill="#5a8aa8"/><circle cx="9" cy="11" r="0.7" fill="#1a4a6a"/></g></svg>
<svg class="a" style="left:122px;top:6px" width="17" height="18" viewBox="0 0 17 18"><ellipse cx="8.5" cy="9" rx="8" ry="8.5" fill="#e0141e"/><ellipse cx="8.5" cy="9" rx="3.6" ry="6.3" fill="#88633f"/></svg>
<svg class="a" style="left:167px;top:6px" width="18" height="18" viewBox="0 0 18 18"><circle cx="9" cy="9" r="8.5" fill="#fff"/><path d="M7 3 L4.5 14 M7.5 8 Q10 6.5 9.5 9 L8.5 13 M11 8 Q14 6.5 13 10 Q12 12.5 10 12 L9 15.5" stroke="#87623f" stroke-width="1.4" fill="none"/></svg>
<div class="tbtn" style="left:201px"></div>
<div class="tbtn" style="left:247px"></div>
<div class="tbtn" style="left:293px;width:38px"></div>
<div class="tbtn" style="left:331px;width:4px"></div>
<div class="tbtn" style="left:339px;background:rgba(255,255,255,0.3);border-color:rgba(255,255,255,0.6)"></div>
<div class="tbtn" style="left:385px"></div>
<div class="tbtn" style="left:431px"></div>
<svg class="a" style="left:213px;top:6px" width="18" height="18" viewBox="0 0 18 18"><circle cx="9" cy="9" r="8.5" fill="#dd4436"/><path d="M9 9 L1.6 13.3 A8.5 8.5 0 0 0 13.3 16.4Z" fill="#1da462"/><path d="M9 9 L13.3 16.4 A8.5 8.5 0 0 0 9 0.5 L9 4.8Z" fill="#ffcd40"/><path d="M9 9 L1.6 4.7 A8.5 8.5 0 0 1 9 0.5 L16.4 4.7Z" fill="#dd4436"/><circle cx="9" cy="9" r="4" fill="#fff"/><circle cx="9" cy="9" r="3.1" fill="#4a8af4"/></svg>
<svg class="a" style="left:260px;top:8px" width="17" height="15" viewBox="0 0 17 15"><path d="M0.5 2 L6 2 L7.5 3.5 L16 3.5 L16 14 L0.5 14Z" fill="#e8c050"/><rect x="0.5" y="5" width="15.5" height="9" fill="#f5d870"/><rect x="4" y="8" width="9" height="6" fill="#3aa0d8"/><rect x="6" y="10" width="5" height="4" fill="#f5d870"/></svg>
<svg class="a" style="left:303px;top:7px" width="15" height="16" viewBox="0 0 15 16"><rect x="3" y="0.5" width="11.5" height="14" fill="#f4f4f8" stroke="#2050a0" stroke-width="0.8"/><rect x="0.5" y="4" width="9" height="9" fill="#2a5aa8"/><text x="1.5" y="11.5" font-size="8" font-weight="bold" fill="#fff" font-family="Liberation Sans">W</text></svg>
<div class="a" style="left:352px;top:7px;width:16px;height:16px;border-radius:50%;background:#1b5ee8;font-size:4.5px;color:#fff;text-align:center;line-height:16px;font-weight:bold">zoom</div>
<svg class="a" style="left:399px;top:8px" width="16" height="14" viewBox="0 0 16 14"><rect x="0.5" y="0.5" width="15" height="13" fill="#4a90d0"/><rect x="2" y="2" width="12" height="10" fill="#e8f0f4"/><path d="M2 12 L6 7 L9 10 L14 6 L14 12Z" fill="#4a7a60"/><rect x="2" y="2" width="12" height="4" fill="#b8d4e8"/></svg>
<svg class="a" style="left:444px;top:6px" width="17" height="17" viewBox="0 0 17 17"><path d="M1 9 Q1 3 8 3 Q14 3 13 8 Q12 10 10 9.5 Q8 9.5 9 12 Q9 15 6 15 Q1 15 1 9Z" fill="#f0ece6"/><circle cx="4.5" cy="8" r="1.3" fill="#3a80d0"/><circle cx="6.5" cy="5.5" r="1.2" fill="#e04040"/><circle cx="9.5" cy="5.5" r="1.2" fill="#40a040"/><circle cx="5" cy="11.5" r="1.2" fill="#f0b020"/><path d="M15 1 L13 12" stroke="#f07020" stroke-width="1.5"/></svg>
<svg class="a" style="left:1147px;top:13px" width="9" height="5" viewBox="0 0 9 5"><path d="M0 5 L4.5 0.5 L9 5Z" fill="#f0f0f0"/></svg>
<svg class="a" style="left:1168px;top:8px" width="17" height="15" viewBox="0 0 17 15"><rect x="1.5" y="0" width="1.4" height="3" fill="#fff"/><rect x="4" y="0" width="1.4" height="3" fill="#fff"/><rect x="0.5" y="3" width="6" height="5" fill="#fff"/><rect x="2.8" y="8" width="1.5" height="7" fill="#fff"/><rect x="9" y="1" width="7" height="13" fill="none" stroke="#fff" stroke-width="1.3"/><rect x="10.5" y="3" width="4" height="9.5" fill="#fff"/><rect x="11.5" y="0" width="2" height="1" fill="#fff"/></svg>
<svg class="a" style="left:1193px;top:8px" width="14" height="14" viewBox="0 0 14 14"><path d="M1 4.5 L4 4.5 L8.5 1 L8.5 13 L4 9.5 L1 9.5Z" fill="#fff"/><path d="M10.5 4.5 Q12.5 7 10.5 9.5" stroke="#fff" stroke-width="1" fill="none"/></svg>
<svg class="a" style="left:1216px;top:8px" width="16" height="14" viewBox="0 0 16 14" fill="#fff"><rect x="0" y="11" width="2" height="2.5"/><rect x="3" y="9" width="2" height="4.5"/><rect x="6" y="6.5" width="2" height="7"/><rect x="9" y="4" width="2" height="9.5" fill="#f4f4f4"/><rect x="12.5" y="0.5" width="3" height="13" fill="#5a4630"/></svg>
<div class="a" style="left:1246px;top:9px;font-size:12px;color:#fff">УКР</div>
<div class="a" style="left:1300px;top:9px;font-size:11.6px;color:#fff;letter-spacing:-0.2px">15:52</div>

</div>
</body></html>
